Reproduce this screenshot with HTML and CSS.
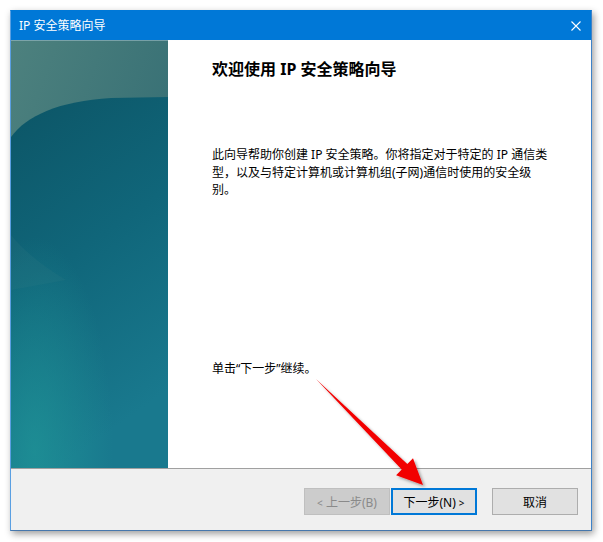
FILE: index.html
```html
<!DOCTYPE html>
<html lang="zh-CN">
<head>
<meta charset="utf-8">
<title>IP 安全策略向导</title>
<link rel="stylesheet" href="styles.css">
</head>
<body>
<div class="window">
  <div class="titlebar">
    <span class="title">IP 安全策略向导</span>
    <svg class="close" width="10" height="10" viewBox="0 0 10 10"><path d="M0.5 0.5 L9.5 9.5 M9.5 0.5 L0.5 9.5" stroke="#fff" stroke-width="1.1" fill="none"/></svg>
  </div>
  <div class="main">
    <div class="side">
      <svg class="art" width="157" height="428" viewBox="0 0 157 428">
        <defs>
          <linearGradient id="gTop" x1="0" y1="0" x2="1" y2="1">
            <stop offset="0" stop-color="#4d817e"/>
            <stop offset="1" stop-color="#2b6670"/>
          </linearGradient>
          <linearGradient id="gLow" x1="0" y1="0" x2="0.3" y2="1">
            <stop offset="0" stop-color="#0c5566"/>
            <stop offset="0.5" stop-color="#10667a"/>
            <stop offset="1" stop-color="#19798e"/>
          </linearGradient>
          <radialGradient id="gGlow" cx="0.15" cy="0.96" r="0.5">
            <stop offset="0" stop-color="#1f9497" stop-opacity="0.75"/>
            <stop offset="1" stop-color="#1f9497" stop-opacity="0"/>
          </radialGradient>
        </defs>
        <rect width="157" height="428" fill="url(#gTop)"/>
        <path d="M0,97 C15,76 48,61 100,58 L157,57 L157,428 L0,428 Z" fill="url(#gLow)"/>
        <path d="M0,195 C12,210 30,225 55,240 L0,250 Z" fill="#2a7580" opacity="0.25"/>
        <rect width="157" height="428" fill="url(#gGlow)"/>
        <rect width="157" height="1" fill="#9cbcc6" opacity="0.6"/>
      </svg>
    </div>
    <div class="content">
      <h1 class="heading">欢迎使用 IP 安全策略向导</h1>
      <p class="desc">此向导帮助你创建 IP 安全策略。你将指定对于特定的 IP 通信类型，以及与特定计算机或计算机组(子网)通信时使用的安全级别。</p>
      <p class="cont">单击“下一步”继续。</p>
    </div>
  </div>
  <div class="buttons">
    <button class="btn btn-disabled" disabled><span class="lt">&lt;</span> 上一步(B)</button>
    <button class="btn btn-default">下一步(N) <span class="lt">&gt;</span></button>
    <button class="btn">取消</button>
  </div>
</div>
<svg class="arrow" width="603" height="542" viewBox="0 0 603 542">
  <defs>
    <filter id="shadow" x="-20%" y="-20%" width="140%" height="140%">
      <feDropShadow dx="2" dy="2" stdDeviation="1.6" flood-color="#000" flood-opacity="0.35"/>
    </filter>
  </defs>
  <polygon points="316,379 407.3,463.9 413,458.2 423,485 396.1,475.2 401.7,469.5" fill="#f20000" filter="url(#shadow)"/>
</svg>
</body>
</html>
```
FILE: styles.css
```css
* { box-sizing: border-box; }
body {
  margin: 0;
  width: 603px;
  height: 542px;
  overflow: hidden;
  position: relative;
  background: #fff;
  font-family: "Noto Sans", "Noto Sans CJK SC", sans-serif;
  font-size: 12px;
  color: #000;
}
.window {
  margin: 10px 0 0 10px;
  width: 582px;
  height: 521px;
  border: 1px solid #3d82c8;
  border-top-color: #0078d7;
  border-left-color: #5a9fe2;
  border-bottom-color: #4677ac;
  display: flex;
  flex-direction: column;
  background: #fff;
  box-shadow: 2px 3px 7px rgba(0,0,0,0.38);
}
.titlebar {
  flex: none;
  height: 29px;
  background: #0078d7;
  color: #fff;
  display: flex;
  align-items: center;
  justify-content: space-between;
  padding: 0 10px 0 8px;
  line-height: 16px;
}
.title { font-size: 12px; }
.close { display: block; }
.main {
  flex: none;
  height: 428px;
  display: flex;
}
.side {
  flex: none;
  width: 157px;
  height: 428px;
}
.art { display: block; }
.content {
  flex: 1;
  padding: 19px 0 0 44px;
}
.heading {
  margin: 0;
  font-size: 16px;
  font-weight: bold;
  line-height: 20px;
}
.desc {
  margin: 67px 0 0;
  width: 341px;
  line-height: 17.5px;
}
.cont {
  margin: 161px 0 0;
  line-height: 17.5px;
}
.buttons {
  flex: none;
  height: 62px;
  border-top: 1px solid #a0a0a0;
  background: #f0f0f0;
  display: flex;
  justify-content: flex-end;
  align-items: flex-start;
  padding: 19px 13px 0 0;
}
.btn {
  width: 86px;
  height: 27px;
  padding: 0;
  font-family: inherit;
  font-size: 12px;
  color: #000;
  background: #e1e1e1;
  border: 1px solid #adadad;
  border-radius: 0;
}
.btn-disabled {
  background: #cccccc;
  border-color: #bfbfbf;
  color: #8a8a8a;
  margin-right: 1px;
}
.btn-default {
  border: 2px solid #0078d7;
  margin-right: 15px;
}
.lt { font-size: 10px; }
.arrow {
  position: absolute;
  left: 0;
  top: 0;
  pointer-events: none;
}
```
